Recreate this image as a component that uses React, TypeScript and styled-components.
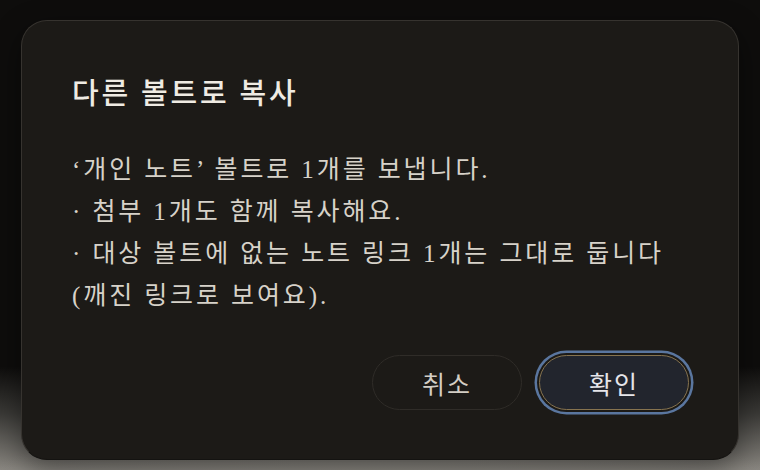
import React from 'react'
import styled, { createGlobalStyle } from 'styled-components'

const GlobalStyle = createGlobalStyle`
  html, body {
    margin: 0;
    padding: 0;
  }
  body {
    width: 760px;
    height: 470px;
    overflow: hidden;
    font-family: "Liberation Serif", "Noto Sans CJK KR", serif;
  }
`

const Backdrop = styled.div`
  width: 760px;
  height: 470px;
  box-sizing: border-box;
  padding: 20px 21px 10px 21px;
  background:
    radial-gradient(ellipse 420px 90px at 380px 500px, rgba(150,147,140,0.9) 0%, rgba(150,147,140,0) 100%),
    linear-gradient(to bottom, #0e0d0c 0%, #0e0d0c 78%, #3b3a37 88%, #8a8781 100%);
  display: flex;
`

const Dialog = styled.div`
  flex: 1;
  box-sizing: border-box;
  height: 440px;
  padding: 55px 49px 49px 50px;
  background: #1c1a17;
  border: 1px solid #36332f;
  border-bottom-color: #141311;
  border-radius: 26px;
  box-shadow: 0 10px 30px rgba(0, 0, 0, 0.45);
  display: flex;
  flex-direction: column;
`

const Title = styled.h2`
  margin: 0;
  font-size: 29px;
  line-height: 36px;
  font-weight: 500;
  letter-spacing: 2.8px;
  color: #efebe3;
`

const Body = styled.div`
  margin-top: 37px;
  font-size: 25px;
  line-height: 42px;
  letter-spacing: 2.9px;
  color: #d7d2c9;
`

const Line = styled.div`
  white-space: nowrap;
`

const Footer = styled.div`
  margin-top: auto;
  display: flex;
  justify-content: flex-end;
  gap: 17px;
`

const Button = styled.button<{ primary?: boolean }>`
  width: 150px;
  height: 55px;
  border-radius: 28px;
  font-family: "Liberation Serif", "Noto Sans CJK KR", serif;
  font-size: 25px;
  letter-spacing: 2px;
  cursor: pointer;
  color: ${({ primary }) => (primary ? '#e6e6ea' : '#d3cec5')};
  background: ${({ primary }) => (primary ? '#22252d' : '#1c1a17')};
  border: 1px solid ${({ primary }) => (primary ? '#86734f' : '#2f2c28')};
  box-shadow: ${({ primary }) =>
    primary ? '0 0 0 2px #1c1a17, 0 0 0 4.5px #5a769f' : 'none'};
`

export default function App() {
  return (
    <>
      <GlobalStyle />
      <Backdrop>
        <Dialog role="dialog">
          <Title>다른 볼트로 복사</Title>
          <Body>
            <Line>‘개인 노트’ 볼트로 1개를 보냅니다.</Line>
            <Line>· 첨부 1개도 함께 복사해요.</Line>
            <Line>· 대상 볼트에 없는 노트 링크 1개는 그대로 둡니다</Line>
            <Line>(깨진 링크로 보여요).</Line>
          </Body>
          <Footer>
            <Button>취소</Button>
            <Button primary>확인</Button>
          </Footer>
        </Dialog>
      </Backdrop>
    </>
  )
}
